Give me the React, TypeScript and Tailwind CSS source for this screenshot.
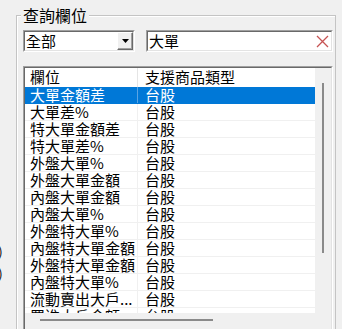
import React from "react";

const rows = [
  "大單金額差",
  "大單差%",
  "特大單金額差",
  "特大單差%",
  "外盤大單%",
  "外盤大單金額",
  "內盤大單金額",
  "內盤大單%",
  "外盤特大單%",
  "內盤特大單金額",
  "外盤特大單金額",
  "內盤特大單%",
  "流動賣出大戶...",
  "買進大戶金額...",
];

function Sunken({ className, children }: { className?: string; children: React.ReactNode }) {
  return (
    <div className={`border border-t-[#a0a0a0] border-l-[#a0a0a0] border-b-white border-r-white ${className ?? ""}`}>
      <div className="h-full w-full border border-t-[#696969] border-l-[#696969] border-b-[#e3e3e3] border-r-[#e3e3e3] bg-white overflow-hidden">
        {children}
      </div>
    </div>
  );
}

export default function App() {
  return (
    <div className="w-[342px] h-[329px] bg-[#f0f0f0] overflow-hidden flex font-['Noto_Sans_CJK_TC',sans-serif] text-[15px] text-black">
      {/* cut-off labels of the panel to the left */}
      <div className="w-[16px] shrink-0 overflow-hidden flex flex-col pt-[243px] gap-[4px] text-[13px] leading-[18px]">
        <span className="ml-[-9px] whitespace-nowrap">a)</span>
        <span className="ml-[-9px] whitespace-nowrap">a)</span>
      </div>

      {/* group box */}
      <div className="relative mt-[15px] w-[320px] h-[330px] shrink-0 border-t border-l border-r border-[#c4c4c4] shadow-[inset_1px_1px_0_#fff] pl-[6px] pt-[14px]">
        <span className="absolute -top-[11px] left-[4px] px-[2px] bg-[#f0f0f0] text-[16px] leading-[20px]">查詢欄位</span>

        <div className="flex gap-[11px]">
          {/* combobox */}
          <Sunken className="w-[112px] h-[22px]">
            <div className="flex h-full items-center">
              <span className="flex-1 pl-[1px] leading-[16px]">全部</span>
              <div className="w-[16px] h-[18px] border border-t-white border-l-white border-b-[#696969] border-r-[#696969] bg-[#f0f0f0] flex items-center justify-center shadow-[inset_-1px_-1px_0_#a0a0a0]">
                <svg width="7" height="4" viewBox="0 0 7 4">
                  <path d="M0 0H7L3.5 4Z" fill="#000" />
                </svg>
              </div>
            </div>
          </Sunken>

          {/* search input */}
          <Sunken className="w-[187px] h-[22px]">
            <div className="flex h-full items-center pr-[2px]">
              <span className="flex-1 pl-[1px] leading-[16px]">大單</span>
              <svg width="13" height="13" viewBox="0 0 13 13">
                <path d="M1 1L12 12M12 1L1 12" stroke="#c65353" strokeWidth="1.3" />
              </svg>
            </div>
          </Sunken>
        </div>

        {/* list view */}
        <Sunken className="mt-[14px] w-[310px] h-[266px]">
          <div className="flex h-full">
            <div className="w-[290px] flex flex-col">
              <div className="h-[19px] shrink-0 flex bg-white leading-[17px]">
                <div className="w-[113px] pl-[5px] border-r border-[#e5e5e5]">欄位</div>
                <div className="pl-[7px]">支援商品類型</div>
              </div>
              <div className="h-[226px] shrink-0 overflow-hidden">
                {rows.map((name, i) => (
                  <div
                    key={i}
                    className={`h-[17px] flex border-b leading-[16px] whitespace-nowrap ${
                      i === 0 ? "bg-[#0078d7] text-white border-[#0078d7]" : "bg-white border-[#f0f0f0]"
                    }`}
                  >
                    <div className={`w-[113px] pl-[5px] border-r ${i === 0 ? "border-[#5aa4e4]" : "border-[#f0f0f0]"}`}>{name}</div>
                    <div className="pl-[7px]">台股</div>
                  </div>
                ))}
              </div>
              <div className="h-[17px] shrink-0 bg-[#f0f0f0] pt-[6px]">
                <div className="ml-[15px] w-[173px] h-[2px] bg-[#8a8a8a]" />
              </div>
            </div>
            <div className="w-[16px] bg-[#f0f0f0] pt-[15px] flex justify-center">
              <div className="w-[2px] h-[170px] bg-[#8a8a8a]" />
            </div>
          </div>
        </Sunken>
      </div>
    </div>
  );
}
